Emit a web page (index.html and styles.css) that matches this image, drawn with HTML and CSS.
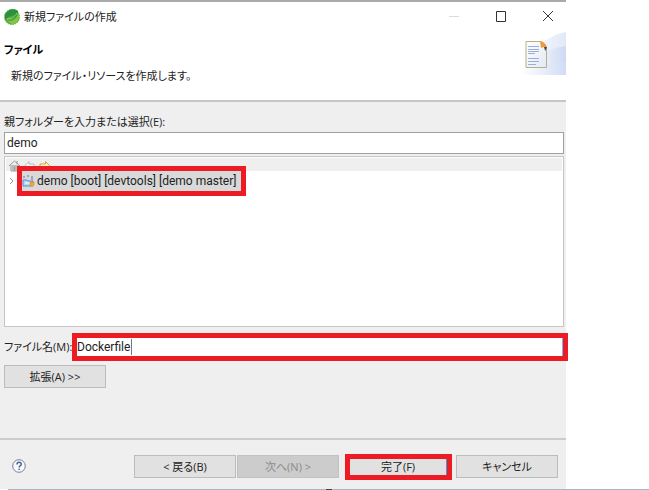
FILE: index.html
```html
<!DOCTYPE html>
<html lang="ja">
<head>
<meta charset="utf-8">
<title>新規ファイルの作成</title>
<link rel="stylesheet" href="styles.css">
</head>
<body>
<form class="dialog">
  <header class="titlebar">
    <svg class="app-icon" viewBox="0 0 18 18" aria-hidden="true">
      <circle cx="9" cy="9" r="7.6" fill="#5dac3b" stroke="#69ad52" stroke-dasharray="1.5 1"/>
      <path d="M2 7C4 1 12 0 15 3C16 9 10 11 4 12C7 10 10 9 12 6C8 9 5 8 2 12Z" fill="#2c913c"/>
      <path d="M4 13C10 14 14 11 15 5C18 10 14 17 9 16Z" fill="#80c840"/>
      <path d="M4 11C8 11 12 9 14 5" fill="none" stroke="#b7dfa0" stroke-width=".8"/>
    </svg>
    <h1 class="window-title">新規ファイルの作成</h1>
    <div class="window-controls">
      <button type="button" class="window-button" aria-label="最小化" disabled>
        <svg viewBox="0 0 12 12"><path d="M1 5.5H11" stroke="#dcdcdc"/></svg>
      </button>
      <button type="button" class="window-button" aria-label="最大化">
        <svg viewBox="0 0 12 12"><path d="M1.5 .5H10.5V10.5H1.5Z" fill="none" stroke="#333"/></svg>
      </button>
      <button type="button" class="window-button" aria-label="閉じる">
        <svg viewBox="0 0 12 12"><path d="M1 0L11 10M11 0L1 10" stroke="#333"/></svg>
      </button>
    </div>
  </header>

  <section class="banner">
    <div class="banner-text">
      <h2 class="banner-title">ファイル</h2>
      <p class="banner-message">新規のファイル・リソースを作成します。</p>
    </div>
    <svg class="banner-art" viewBox="0 0 47 44" aria-hidden="true">
      <defs>
        <linearGradient id="sweep"><stop offset="0" stop-color="#fff"/><stop offset="1" stop-color="#cddaf3"/></linearGradient>
        <linearGradient id="page" x2="1" y2="1"><stop offset="0" stop-color="#fff"/><stop offset="1" stop-color="#e0e9f6"/></linearGradient>
      </defs>
      <path d="M47 0C27 4 10 18 1 43H47Z" fill="url(#sweep)" opacity=".6"/>
      <path d="M47 14C32 16 18 22 8 32L47 30Z" fill="url(#sweep)"/>
      <path d="M1 43C16 34 32 30 47 29V43Z" fill="url(#sweep)" opacity=".8"/>
      <path d="M7 9.500H22L27.500 16V35.500H7Z" fill="url(#page)" stroke="#b9af84"/>
      <path d="M21 9C24 9 27 12 28 15L26 19L25 15L22 16Z" fill="#ee9b3b"/>
      <path d="M25 15H28L26.500 19Z" fill="#446"/>
      <path d="M9 14.500H20M9 17.500H20M9 19.500H20M9 21.500H16M9 26.500H20M9 29.500H20M9 32.500H17" stroke="#9caed6"/>
    </svg>
  </section>

  <main class="content">
    <label class="label" for="parent">親フォルダーを入力または選択(E):</label>
    <input class="text-field" id="parent" type="text" value="demo">

    <div class="tree">
      <div class="tree-toolbar">
        <button type="button" class="tool" aria-label="ホーム">
          <svg viewBox="0 0 14 12"><path d="M1 6L6.500 1L12 6M3 5V11H10V5M6.500 11V7M9 1V4" fill="none" stroke="#999"/><path d="M4 5H9V11H7V7H6V11H4Z" fill="#bbb"/></svg>
        </button>
        <button type="button" class="tool" aria-label="戻る">
          <svg viewBox="0 0 14 12"><path d="M1.500 6L6 1.500V4H11V8H6V10.500Z" fill="#f7f7f7" stroke="#bbb"/></svg>
        </button>
        <button type="button" class="tool" aria-label="進む">
          <svg viewBox="0 0 14 12"><path d="M12 6L7.500 1.500V4H2V8H7.500V10.500Z" fill="#fff5cd" stroke="#d5a339"/></svg>
        </button>
      </div>
      <div class="tree-row">
        <button type="button" class="expander" aria-label="展開">
          <svg viewBox="0 0 6 8"><path d="M1 1L4 4L1 7" fill="none" stroke="#999"/></svg>
        </button>
        <button type="button" class="tree-item highlight">
          <svg class="project-icon" viewBox="0 0 13 13" aria-hidden="true">
            <path d="M1 5H5L6 6H11L9 11H1Z" fill="#b5d3f5" stroke="#5f8cc8"/>
            <path d="M2 1V3M5 1H7M10 1V5" stroke="#5277ae"/>
            <path d="M3 8H8" stroke="#fff"/>
            <path d="M8 7H12V10L10 12L8 10Z" fill="#efaa35" stroke="#c97e1d" stroke-width=".5"/>
          </svg>
          <span>demo [boot] [devtools] [demo master]</span>
        </button>
      </div>
    </div>

    <div class="file-row">
      <label for="filename">ファイル名(M):</label>
      <div class="file-box highlight">
        <input class="file-input" id="filename" type="text" value="Dockerfile">
        <span class="caret"></span>
      </div>
    </div>
    <button type="button" class="button">拡張(A) &gt;&gt;</button>
  </main>

  <footer class="footer">
    <button type="button" class="help" aria-label="ヘルプ">
      <svg viewBox="0 0 14 14"><circle cx="7" cy="7" r="6.300" fill="#f8f9fc" stroke="#727f9b"/><path d="M5 5.500C5 2.700 9.300 2.700 9.300 5.200C9.300 6.800 7.200 6.600 7.200 8.500M7.200 9.700V11" fill="none" stroke="#4b6090" stroke-width="1.500"/></svg>
    </button>
    <div class="actions">
      <button type="button" class="button">&lt; 戻る(B)</button>
      <button type="button" class="button" disabled>次へ(N) &gt;</button>
      <button type="submit" class="button finish highlight">完了(F)</button>
      <button type="button" class="button">キャンセル</button>
    </div>
  </footer>
</form>
<div class="baseline"><span class="baseline-mark"></span></div>
</body>
</html>
```
FILE: styles.css
```css
* {
  box-sizing: border-box;
}

body {
  margin: 0;
  min-height: 100vh;
  display: flex;
  flex-direction: column;
  background: #fff;
  color: #222;
  font: 11px/16px "Open Sans", "Noto Sans CJK JP", sans-serif;
  font-feature-settings: "palt";
}

button,
input {
  margin: 0;
  padding: 0;
  border: 0;
  border-radius: 0;
  background: none;
  color: inherit;
  font: inherit;
  font-feature-settings: inherit;
}

svg {
  display: block;
}

h1,
h2,
p {
  margin: 0;
}

.dialog {
  flex: 1;
  display: flex;
  flex-direction: column;
  margin-right: 83px;
  background: #efefef;
}

.titlebar {
  display: flex;
  align-items: center;
  height: 32px;
  padding-left: 3px;
  border-top: 2px solid #aaa;
  background: #fff;
}

.app-icon {
  width: 18px;
  height: 18px;
  margin-right: 3px;
}

.window-title {
  flex: 1;
  font-size: 11px;
  font-weight: 400;
}

.window-controls {
  display: flex;
  gap: 12px;
  padding-right: 1px;
}

.window-button {
  display: grid;
  place-items: center;
  width: 35px;
  height: 28px;
}

.window-button svg {
  width: 12px;
  height: 12px;
}

.banner {
  display: flex;
  justify-content: space-between;
  height: 70px;
  border-bottom: 2px solid #c6c6c6;
  background: #fff;
}

.banner-text {
  display: grid;
  gap: 10px;
  align-content: start;
  padding: 10px 0 0 4px;
}

.banner-title {
  font-size: 11px;
  font-weight: 700;
  color: #000;
}

.banner-message {
  padding-left: 7px;
}

.banner-art {
  width: 47px;
  height: 44px;
}

.content {
  flex: 1;
  display: flex;
  flex-direction: column;
  align-items: stretch;
  padding: 12px 2px 0 4px;
}

.text-field {
  width: 100%;
  height: 22px;
  margin: 2px 0;
  padding: 0 2px;
  border: 1px solid #a0a0a0;
  background: #fff;
}

.text-field,
.tree-item,
.file-input {
  font-family: Roboto, "Noto Sans CJK JP", sans-serif;
  font-size: 12px;
}

.tree {
  height: 171px;
  padding: 1px;
  border: 1px solid #c4c5c9;
  background: #fff;
}

.tree-toolbar {
  display: flex;
  gap: 1px;
  height: 13px;
  padding: 2px 0 0 2px;
  background: #efefef;
}

.tool {
  width: 14px;
  height: 12px;
}

.tree-row {
  display: flex;
  align-items: center;
  gap: 7px;
  height: 20px;
  padding-left: 3px;
}

.expander svg {
  width: 6px;
  height: 8px;
}

.expander {
  width: 6px;
}

.highlight {
  box-shadow: 0 0 0 5px #ed1c24;
}

.tree-item {
  display: flex;
  align-items: center;
  gap: 2px;
  min-width: 219px;
  height: 20px;
  background: #d9d9d9;
  white-space: nowrap;
}

.project-icon {
  flex: none;
  width: 13px;
  height: 13px;
}

.file-row {
  display: flex;
  align-items: center;
  justify-content: space-between;
  margin: 11px 0 9px;
  padding-right: 1px;
  white-space: nowrap;
}

.file-box {
  position: relative;
  width: calc(100% - 73px);
  height: 18px;
  border-right: 1px solid #7ab5ef;
  background: #fff;
}

.file-input {
  display: block;
  width: 100%;
  height: 18px;
}

.caret {
  position: absolute;
  top: 1px;
  left: 54px;
  width: 1px;
  height: 16px;
  background: #777;
}

.button {
  width: 102px;
  height: 23px;
  border: 1px solid #bcbcbc;
  background: #e1e1e1;
}

.button:disabled {
  border-color: #c2c2c2;
  background: #ccc;
  color: #8b8b8b;
}

.footer {
  display: flex;
  align-items: flex-start;
  justify-content: space-between;
  height: 51px;
  padding: 15px 8px 0 12px;
  border-top: 2px solid #cbcbcb;
}

.help {
  width: 14px;
  height: 14px;
  margin-top: 4px;
}

.actions {
  display: flex;
  align-items: center;
  gap: 1px;
}

.finish {
  width: 97px;
  height: 16px;
  margin: 0 8px 0 10px;
  border: 0;
  border-right: 1px solid #4296dc;
  line-height: 16px;
}

.baseline {
  display: flex;
  justify-content: center;
  height: 1px;
  margin-left: 8px;
  background: #a9b6ca;
}

.baseline-mark {
  width: 6px;
  background: #444;
}
```
